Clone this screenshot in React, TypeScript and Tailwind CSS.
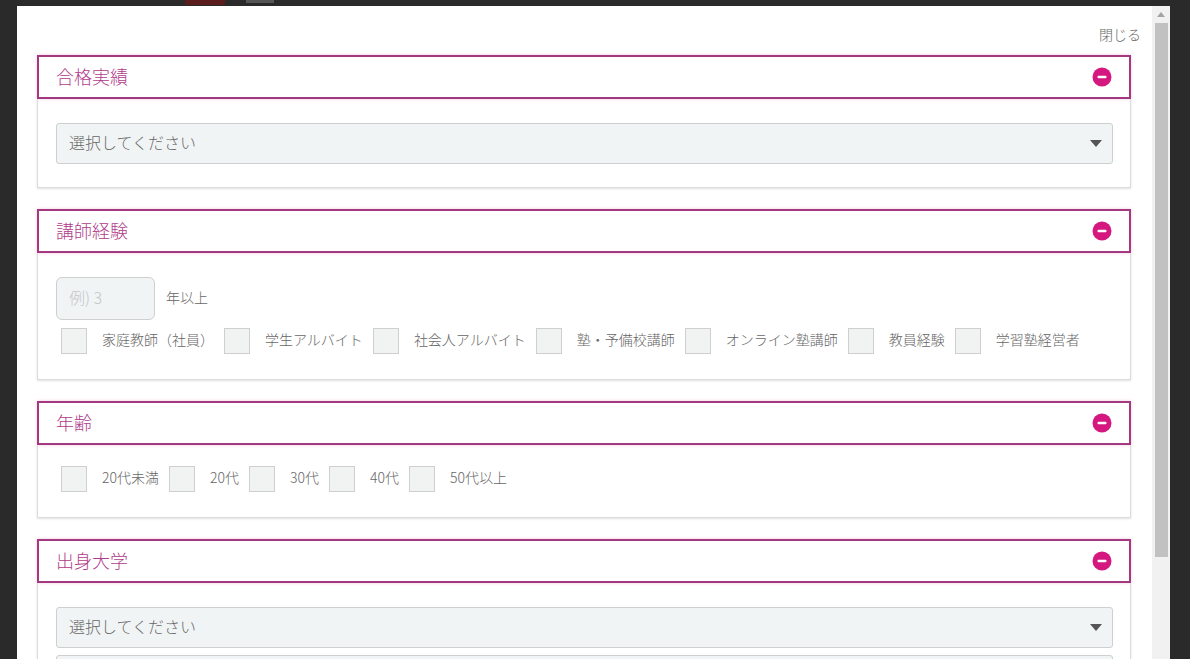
import type { ReactNode } from 'react';

const font = { fontFamily: '"Noto Sans CJK JP", "Noto Sans", sans-serif' };

function MinusIcon() {
  return (
    <svg width="20" height="20" viewBox="0 0 20 20">
      <circle cx="10" cy="10" r="9.5" fill="#d5187f" />
      <rect x="5.5" y="8.8" width="9" height="2.4" rx="1" fill="#ffffff" />
    </svg>
  );
}

function Section({ title, bodyClass, children }: { title: string; bodyClass: string; children: ReactNode }) {
  return (
    <div>
      <div className="flex h-[44px] items-center justify-between border-2 border-[#a3397f] pl-[17px] pr-[17px] shadow-[0_0_3px_rgba(213,24,127,0.25)]">
        <span className="mb-[3px] text-[18px] font-light leading-none text-[#b03c89]">{title}</span>
        <MinusIcon />
      </div>
      <div className={`border border-t-0 border-[#dcdcdc] pl-[18px] pr-[17px] shadow-[0_1px_2px_rgba(0,0,0,0.12)] ${bodyClass}`}>
        {children}
      </div>
    </div>
  );
}

function SelectBox() {
  return (
    <div className="flex h-[41px] items-center justify-between rounded-[3px] border border-[#cfcfcf] bg-[#f1f4f5] pl-[12px] pr-[10px]">
      <span className="mb-[3px] text-[16px] font-light leading-none text-[#666]">選択してください</span>
      <svg width="12" height="7" viewBox="0 0 12 7">
        <path d="M0 0 L12 0 L6 7 Z" fill="#555" />
      </svg>
    </div>
  );
}

function CheckRow({ items }: { items: string[] }) {
  return (
    <div className="flex items-center pl-[5px]">
      {items.map((label) => (
        <div key={label} className="mr-[10px] flex items-center">
          <span className="h-[26px] w-[26px] border border-[#cfcfcf] bg-[#f1f3f3]" />
          <span className="mb-[5px] ml-[15px] text-[14px] font-light leading-none text-[#666]">{label}</span>
        </div>
      ))}
    </div>
  );
}

export default function App() {
  return (
    <div className="relative h-[659px] w-[1190px] overflow-hidden bg-[#2a2a2a] pl-[17px] pt-[6px]" style={font}>
      <div className="absolute left-[185px] top-0 h-[5px] w-[40px] bg-[#5b1c1c]" />
      <div className="absolute left-[246px] top-0 h-[3px] w-[28px] bg-[#555]" />
      <div className="flex h-[653px] w-[1153px]">
        <div className="flex-1 bg-white pl-[20px] pr-[21px] pt-[19px]">
          <div className="mb-[10px] mr-[-10px] flex h-[20px] items-center justify-end">
            <span className="mb-[3px] text-[14px] font-light leading-none text-[#666]">閉じる</span>
          </div>
          <div className="flex flex-col gap-[21px]">
            <Section title="合格実績" bodyClass="pt-[24px] pb-[23px]">
              <SelectBox />
            </Section>
            <Section title="講師経験" bodyClass="pt-[24px] pb-[25px]">
              <div className="flex items-center">
                <div className="flex h-[43px] w-[99px] items-center rounded-[6px] border border-[#cfcfcf] bg-[#f1f4f5] pl-[12px]">
                  <span className="mb-[3px] text-[16px] font-light leading-none text-[#c2c6c6]">例) 3</span>
                </div>
                <span className="mb-[3px] ml-[11px] text-[14px] font-light leading-none text-[#666]">年以上</span>
              </div>
              <div className="mt-[8px]">
                <CheckRow items={['家庭教師（社員）', '学生アルバイト', '社会人アルバイト', '塾・予備校講師', 'オンライン塾講師', '教員経験', '学習塾経営者']} />
              </div>
            </Section>
            <Section title="年齢" bodyClass="pt-[21px] pb-[25px]">
              <CheckRow items={['20代未満', '20代', '30代', '40代', '50代以上']} />
            </Section>
            <Section title="出身大学" bodyClass="pt-[24px] pb-[23px]">
              <SelectBox />
              <div className="mt-[7px]">
                <SelectBox />
              </div>
            </Section>
          </div>
        </div>
        <div className="flex w-[18px] flex-col items-center bg-[#f1f1f1]">
          <svg width="8" height="5" viewBox="0 0 8 5" className="mt-[6px]">
            <path d="M0 5 L8 5 L4 0 Z" fill="#a3a3a3" />
          </svg>
          <div className="mt-[6px] h-[534px] w-[13px] bg-[#c1c1c1]" />
        </div>
      </div>
    </div>
  );
}
